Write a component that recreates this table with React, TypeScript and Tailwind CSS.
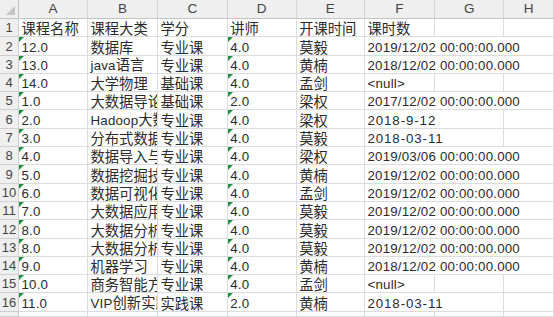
import type { ReactNode } from "react";

type Row = {
  a: string;
  b: string;
  c: string;
  d: string;
  e: string;
  f: string;
};

const ROWS: Row[] = [
  { a: "课程名称", b: "课程大类", c: "学分", d: "讲师", e: "开课时间", f: "课时数" },
  { a: "12.0", b: "数据库", c: "专业课", d: "4.0", e: "莫毅", f: "2019/12/02 00:00:00.000" },
  { a: "13.0", b: "java语言", c: "专业课", d: "4.0", e: "黄楠", f: "2018/12/02 00:00:00.000" },
  { a: "14.0", b: "大学物理", c: "基础课", d: "4.0", e: "孟剑", f: "<null>" },
  { a: "1.0", b: "大数据导论", c: "基础课", d: "2.0", e: "梁权", f: "2017/12/02 00:00:00.000" },
  { a: "2.0", b: "Hadoop大数据", c: "专业课", d: "4.0", e: "梁权", f: "2018-9-12" },
  { a: "3.0", b: "分布式数据库", c: "专业课", d: "4.0", e: "莫毅", f: "2018-03-11" },
  { a: "4.0", b: "数据导入与预处理", c: "专业课", d: "4.0", e: "梁权", f: "2019/03/06 00:00:00.000" },
  { a: "5.0", b: "数据挖掘技术", c: "专业课", d: "4.0", e: "黄楠", f: "2019/12/02 00:00:00.000" },
  { a: "6.0", b: "数据可视化", c: "专业课", d: "4.0", e: "孟剑", f: "2019/12/02 00:00:00.000" },
  { a: "7.0", b: "大数据应用", c: "专业课", d: "4.0", e: "莫毅", f: "2019/12/02 00:00:00.000" },
  { a: "8.0", b: "大数据分析", c: "专业课", d: "4.0", e: "莫毅", f: "2019/12/02 00:00:00.000" },
  { a: "8.0", b: "大数据分析", c: "专业课", d: "4.0", e: "莫毅", f: "2019/12/02 00:00:00.000" },
  { a: "9.0", b: "机器学习", c: "专业课", d: "4.0", e: "黄楠", f: "2018/12/02 00:00:00.000" },
  { a: "10.0", b: "商务智能方法", c: "专业课", d: "4.0", e: "孟剑", f: "<null>" },
  { a: "11.0", b: "VIP创新实践", c: "实践课", d: "2.0", e: "黄楠", f: "2018-03-11" },
];

const COLS = ["A", "B", "C", "D", "E", "F", "G", "H"];

const isDash = (s: string) => /^\d+-\d+-\d+$/.test(s);

// split latin / CJK runs so each gets its own size
function Text({ value }: { value: string }) {
  const parts = value.split(/([\u4e00-\u9fff]+)/).filter(Boolean);
  return (
    <>
      {parts.map((p, i) =>
        /[\u4e00-\u9fff]/.test(p) ? (
          <span key={i} className="font-['Noto_Sans_CJK_SC',sans-serif] text-[14.3px]">
            {p}
          </span>
        ) : (
          <span
            key={i}
            className={
              "font-['Liberation_Sans',Arial,sans-serif] text-[13.3px] " +
              (isDash(p) ? "tracking-[0.9px]" : "tracking-[0.2px]")
            }
          >
            {p}
          </span>
        ),
      )}
    </>
  );
}

function Cell({ value, flag, span = 1 }: { value?: string; flag?: boolean; span?: number }) {
  return (
    <div
      className={
        "relative flex items-end overflow-hidden whitespace-nowrap border-b border-r border-[#dadcdd] bg-white pl-[2.5px] leading-[15px] text-[#2b2b2b] " +
        (span === 3 ? "col-span-3" : span === 2 ? "col-span-2" : "")
      }
    >
      {flag && (
        <span className="absolute left-0 top-0 h-0 w-0 border-r-[5px] border-t-[5px] border-r-transparent border-t-[#1e8f3c]" />
      )}
      {value && (
        <span>
          <Text value={value} />
        </span>
      )}
    </div>
  );
}

function RowHead({ children }: { children?: ReactNode }) {
  return (
    <div className="flex items-end justify-center border-b border-r border-[#cfcfcf] bg-[#efefef] pb-[1px] font-['Liberation_Sans',Arial,sans-serif] text-[13px] leading-[15px] text-[#444]">
      {children}
    </div>
  );
}

export default function App() {
  return (
    <div className="h-[317px] w-[554px] overflow-hidden bg-white">
      <div className="grid h-[317px] grid-cols-[19px_69px_70px_69.7px_69px_68.3px_70px_69.3px_1fr] grid-rows-[19px_repeat(16,18.3px)_1fr]">
        {/* corner */}
        <div className="relative border-b border-r border-[#c4c4c4] bg-[#efefef]">
          <span className="absolute bottom-[3px] right-[3px] h-0 w-0 border-b-[9px] border-l-[9px] border-b-[#c3c3c3] border-l-transparent" />
        </div>
        {COLS.map((c) => (
          <div
            key={c}
            className="flex items-end justify-center border-b border-r border-b-[#c4c4c4] border-r-[#d4d4d4] bg-[#efefef] pb-[1px] font-['Liberation_Sans',Arial,sans-serif] text-[13.5px] leading-[16px] text-[#444]"
          >
            {c}
          </div>
        ))}

        {ROWS.map((r, i) => {
          const numeric = i > 0;
          const span = r.f.length > 12 ? 3 : isDash(r.f) ? 2 : 1;
          return [
            <RowHead key={`h${i}`}>{i + 1}</RowHead>,
            <Cell key={`a${i}`} value={r.a} flag={numeric} />,
            <Cell key={`b${i}`} value={r.b} />,
            <Cell key={`c${i}`} value={r.c} />,
            <Cell key={`d${i}`} value={r.d} flag={numeric} />,
            <Cell key={`e${i}`} value={r.e} />,
            <Cell key={`f${i}`} value={r.f} span={span} />,
            span < 2 && <Cell key={`g${i}`} />,
            span < 3 && <Cell key={`x${i}`} />,
          ];
        })}

        {/* partial row 17 */}
        <RowHead />
        {COLS.map((c) => (
          <Cell key={`r17${c}`} />
        ))}
      </div>
    </div>
  );
}
